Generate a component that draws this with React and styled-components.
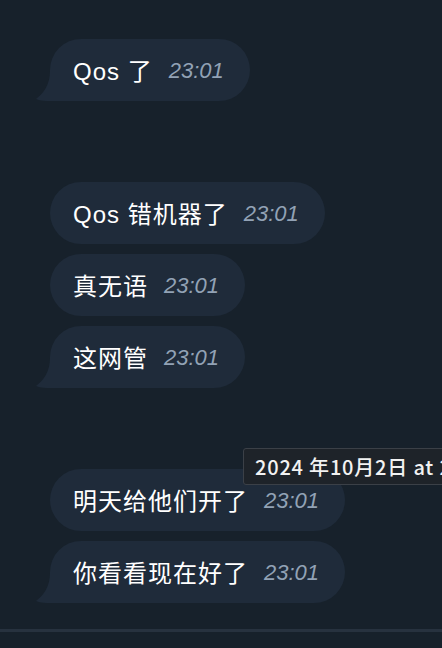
import React from "react";
import styled, { createGlobalStyle } from "styled-components";

const GlobalStyle = createGlobalStyle`
  html, body {
    margin: 0;
    padding: 0;
    background: #17212b;
    overflow: hidden;
  }
  body {
    font-family: "Liberation Sans", "Noto Sans CJK SC", sans-serif;
  }
`;

const groups = [
  [{ text: "Qos 了", time: "23:01" }],
  [
    { text: "Qos 错机器了", time: "23:01" },
    { text: "真无语", time: "23:01" },
    { text: "这网管", time: "23:01" },
  ],
  [
    { text: "明天给他们开了", time: "23:01" },
    { text: "你看看现在好了", time: "23:01" },
  ],
];

function Tail() {
  return (
    <TailSvg width="14" height="30" viewBox="0 0 14 30">
      <path d="M14 0 C14 13 8 22 0 28 C5 30 10 30 14 30 Z" fill="#1f2b3a" />
    </TailSvg>
  );
}

function App() {
  return (
    <Page>
      <GlobalStyle />
      <Chat>
        {groups.map((group, gi) => (
          <Group key={gi}>
            {group.map((m, i) => {
              const last = i === group.length - 1;
              return (
                <Bubble key={i} $tail={last}>
                  <Text>{m.text}</Text>
                  <Time>{m.time}</Time>
                  {last && <Tail />}
                  {gi === 2 && i === 0 && (
                    <Tooltip>2024 年10月2日 at 23:01:12</Tooltip>
                  )}
                </Bubble>
              );
            })}
          </Group>
        ))}
      </Chat>
      <Footer />
    </Page>
  );
}

const Page = styled.div`
  width: 442px;
  height: 648px;
  display: flex;
  flex-direction: column;
  background: #17212b;
  overflow: hidden;
`;

const Chat = styled.div`
  flex: 1;
  display: flex;
  flex-direction: column;
  gap: 81px;
  padding: 39px 0 0 50px;
`;

const Group = styled.div`
  display: flex;
  flex-direction: column;
  align-items: flex-start;
  gap: 10px;
`;

const Bubble = styled.div`
  position: relative;
  height: 62px;
  box-sizing: border-box;
  display: flex;
  align-items: center;
  gap: 16px;
  padding: 0 26px 0 23px;
  background: #1f2b3a;
  border-radius: 31px;
  border-bottom-left-radius: ${(p) => (p.$tail ? "0" : "31px")};
`;

const Text = styled.span`
  color: #ffffff;
  font-size: 24px;
  letter-spacing: 1px;
  margin-top: -2px;
`;

const Time = styled.span`
  color: #92a2b5;
  font-size: 22px;
  font-style: italic;
  margin-top: 2px;
`;

const TailSvg = styled.svg`
  position: absolute;
  left: -14px;
  bottom: 0;
`;

const Tooltip = styled.div`
  position: absolute;
  left: 193px;
  top: -21px;
  height: 37px;
  box-sizing: border-box;
  display: flex;
  align-items: center;
  padding: 0 11px;
  background: #1e2329;
  border: 1px solid #3b4047;
  border-radius: 3px;
  color: #f2f2f2;
  font-family: "Noto Sans CJK SC", sans-serif;
  font-size: 20px;
  font-weight: 500;
  letter-spacing: 0.8px;
  white-space: nowrap;
  z-index: 2;
`;

const Footer = styled.div`
  height: 16px;
  border-top: 3px solid #27323f;
`;

export default App;
